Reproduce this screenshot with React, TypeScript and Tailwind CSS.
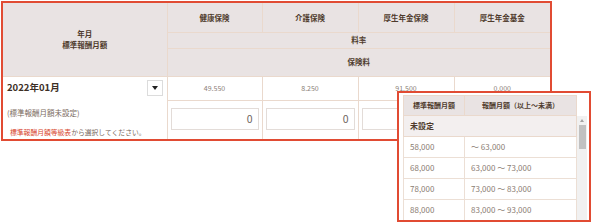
import React from 'react';

const rows = [
    { grade: '58,000', range: '～ 63,000' },
    { grade: '68,000', range: '63,000 ～ 73,000' },
    { grade: '78,000', range: '73,000 ～ 83,000' },
    { grade: '88,000', range: '83,000 ～ 93,000' },
];

const values = ['49.550', '8.250', '91.500', '0.000'];
const heads = ['健康保険', '介護保険', '厚生年金保険', '厚生年金基金'];

const App: React.FC = () => {
    return (
        <div
            className="relative w-[591px] h-[222px] bg-white overflow-hidden"
            style={{ fontFamily: '"Noto Sans CJK JP", "Noto Sans", sans-serif' }}
        >
            {/* Main table */}
            <div className="absolute left-[1px] top-[1px] w-[551px] h-[140px] border-2 border-[#e14b33]">
                <table className="border-collapse table-fixed w-[547px]">
                    <colgroup>
                        <col className="w-[164px]" />
                        <col className="w-[95px]" />
                        <col className="w-[96px]" />
                        <col className="w-[96px]" />
                        <col className="w-[96px]" />
                    </colgroup>
                    <thead className="bg-[#e9e3e3] text-[#4f3b2d] font-bold text-[7.5px] leading-none">
                        <tr className="h-[29px]">
                            <th rowSpan={3} className="border border-[#ead9cd] border-l-0 border-t-0 leading-[11px]">
                                年月<br />標準報酬月額
                            </th>
                            {heads.map((h, i) => (
                                <th key={h} className={`border border-[#ead9cd] border-t-0 ${i === 3 ? 'border-r-0' : ''}`}>{h}</th>
                            ))}
                        </tr>
                        <tr className="h-[16px]">
                            <th colSpan={4} className="border border-[#ead9cd] border-r-0">料率</th>
                        </tr>
                        <tr className="h-[28px]">
                            <th colSpan={4} className="border border-[#ead9cd] border-r-0">保険料</th>
                        </tr>
                    </thead>
                    <tbody>
                        <tr className="h-[24px]">
                            <td rowSpan={2} className="border-r border-[#ead9cd] align-top px-[4px] pt-[3px]">
                                <div className="flex items-center justify-between h-[16px]">
                                    <span className="text-[9.5px] font-bold text-[#3d2f26]">2022年01月</span>
                                    <div className="w-[16px] h-[16px] border border-[#dcdcdc] bg-white flex items-center justify-center">
                                        <div className="w-0 h-0 border-l-[3px] border-r-[3px] border-t-[4px] border-l-transparent border-r-transparent border-t-[#222]" />
                                    </div>
                                </div>
                                <div className="text-[7.5px] text-[#7a6a60] mt-[13px] leading-none">(標準報酬月額未設定)</div>
                                <div className="text-[6.8px] text-[#7a6a60] mt-[13px] ml-[3px] leading-none">
                                    <span className="text-[#d8452d]">標準報酬月額等級表</span>から選択してください。
                                </div>
                            </td>
                            {values.map((v, i) => (
                                <td key={v} className={`border border-t-0 border-[#ead9cd] text-center text-[7px] text-[#8a7e76] ${i === 3 ? 'border-r-0' : ''}`}>{v}</td>
                            ))}
                        </tr>
                        <tr className="h-[39px]">
                            {values.map((v, i) => (
                                <td key={v} className={`border-r border-[#ead9cd] px-[3px] align-middle ${i === 3 ? 'border-r-0' : ''}`}>
                                    <div className="h-[22px] border border-[#e3dcd8] bg-white flex items-center justify-end pr-[5px] text-[10.5px] text-[#6e645e] mt-[-1px]">0</div>
                                </td>
                            ))}
                        </tr>
                    </tbody>
                </table>
            </div>

            {/* Grade popup */}
            <div className="absolute left-[397px] top-[91px] w-[194px] h-[131px] border-2 border-[#e14b33] bg-white pl-[4px] pt-[2px] pr-[2px] overflow-hidden">
                <div className="w-[174px] flex h-[21px] bg-[#e9e3e3] border border-[#ead9cd] text-[7px] font-bold text-[#4f3b2d]">
                    <div className="w-[61px] flex items-center justify-center border-r border-[#ead9cd]">標準報酬月額</div>
                    <div className="flex-1 flex items-center justify-center">報酬月額（以上～未満）</div>
                </div>
                <div className="flex">
                    <div className="w-[174px]">
                        <div className="h-[21px] bg-[#f3efef] border-x border-b border-[#ead9cd] flex items-center pl-[6px] text-[8px] font-bold text-[#4f3b2d]">未設定</div>
                        {rows.map(r => (
                            <div key={r.grade} className="flex h-[21px] border-x border-b border-[#ecdfd5] text-[8px] text-[#8a7c72]">
                                <div className="w-[61px] flex items-center pl-[6px] border-r border-[#ecdfd5]">{r.grade}</div>
                                <div className="flex-1 flex items-center pl-[6px]">{r.range}</div>
                            </div>
                        ))}
                    </div>
                    <div className="w-[10px] bg-[#f1f1f1] flex flex-col items-center">
                        <div className="mt-[3px] w-0 h-0 border-l-[2.5px] border-r-[2.5px] border-b-[3px] border-l-transparent border-r-transparent border-b-[#a3a3a3]" />
                        <div className="mt-[3px] w-[7px] h-[24px] bg-[#c1c1c1]" />
                    </div>
                </div>
            </div>
        </div>
    );
};

export default App;
